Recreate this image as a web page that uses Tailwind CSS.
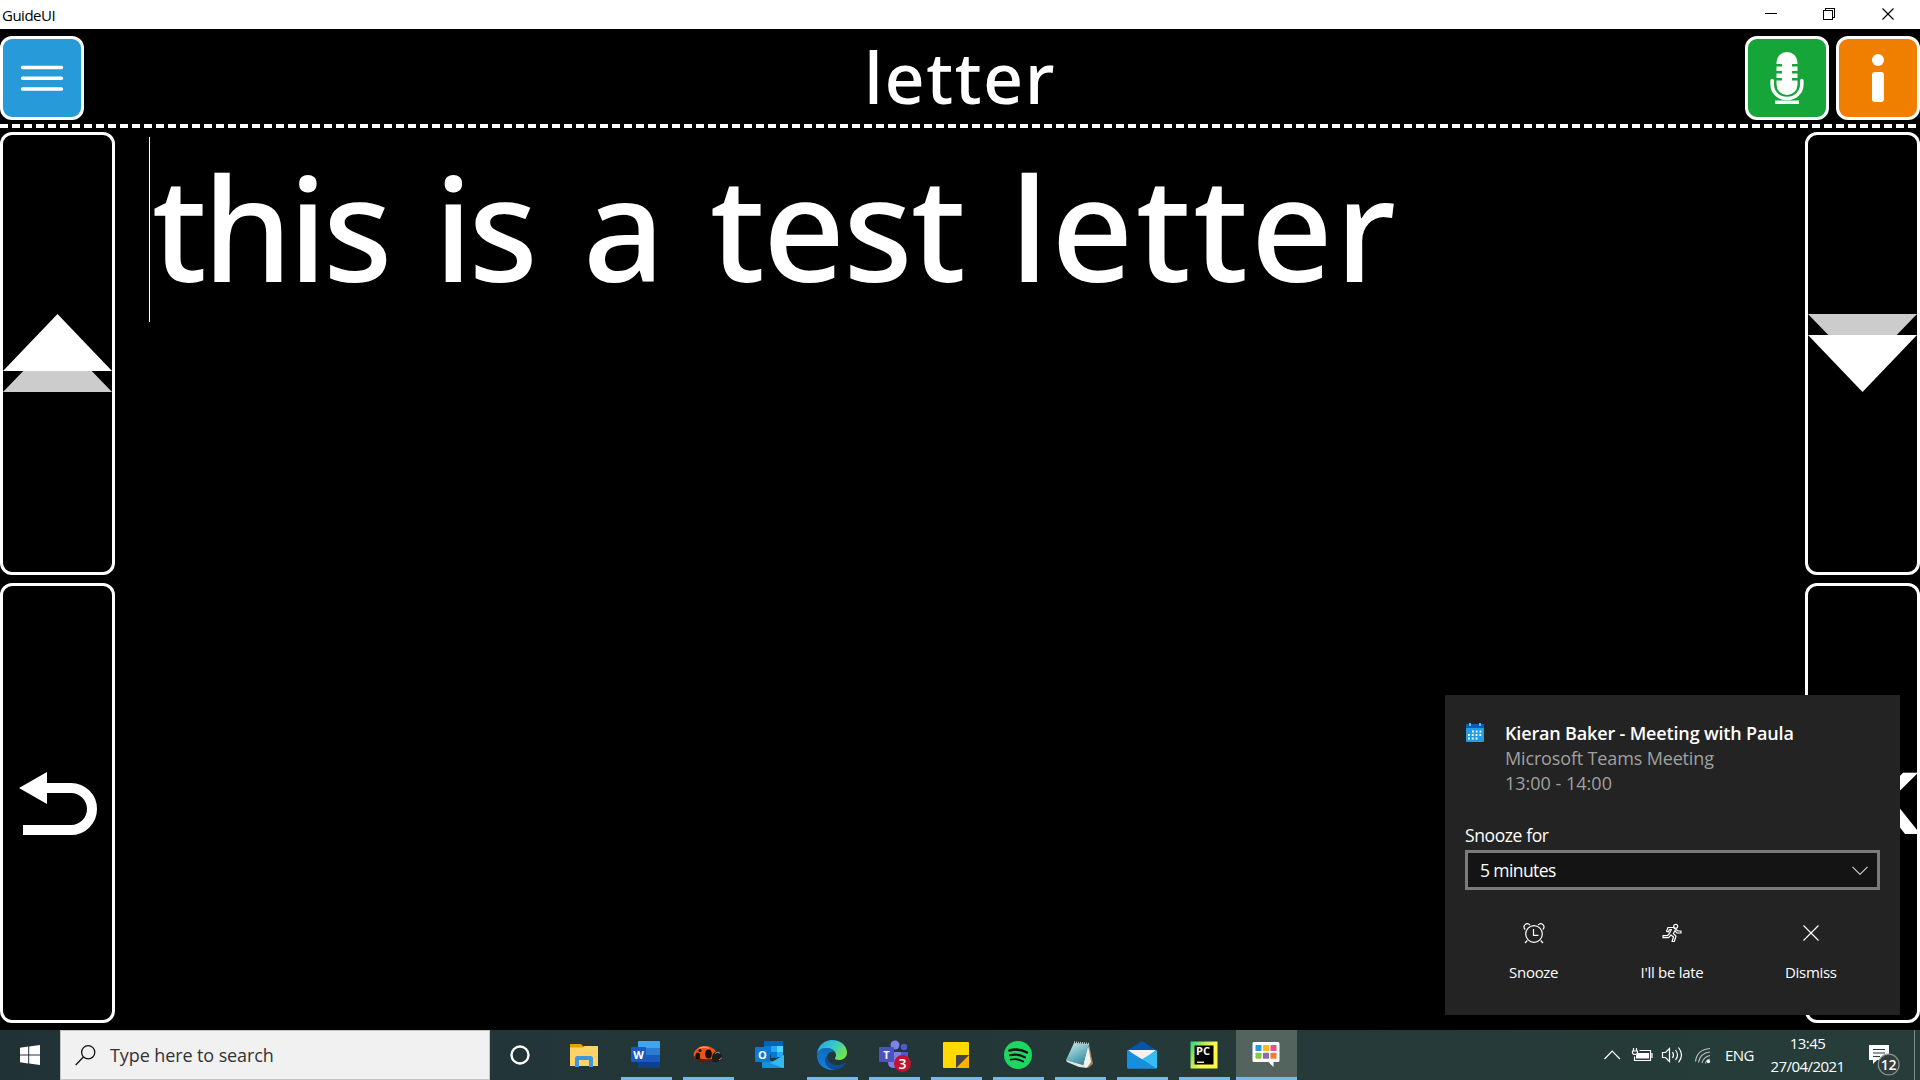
<!DOCTYPE html>
<html lang="en">
<head>
<meta charset="utf-8">
<title>GuideUI</title>
<script src="https://cdn.jsdelivr.net/npm/@tailwindcss/browser@4"></script>
</head>
<body class="relative flex h-[1080px] w-[1920px] flex-col overflow-hidden bg-black font-['Open_Sans',sans-serif] text-white">

<!-- Title bar -->
<header class="flex h-[29px] shrink-0 items-center justify-between bg-white text-black">
  <span class="pt-px pl-[2px] text-[15px] leading-none tracking-[-0.5px]">GuideUI</span>
  <svg class="h-[29px] w-[160px]" viewBox="1760 0 160 29" fill="none" stroke="#000" shape-rendering="crispEdges">
    <path d="M1765 13.500h12M1823.500 10.500h9v9h-9zM1825.500 10.500v-2h9v9h-2"/>
    <path d="M1882.500 8.500l11 11M1893.500 8.500l-11 11" shape-rendering="auto" stroke-width="1.200"/>
  </svg>
</header>

<!-- Heading row -->
<section class="flex h-[95px] shrink-0 items-start justify-between pt-[7px]">
  <div class="flex w-[175px]">
    <button class="flex h-[84px] w-[84px] items-center justify-center rounded-[12px] border-3 border-white bg-[#279bd9]">
      <svg class="h-[30px] w-[44px]" viewBox="0 0 44 30" stroke="#fff" stroke-width="3.400" stroke-linecap="round"><path d="M2.500 4.500h39M2.500 15.300h39M2.500 26h39"/></svg>
    </button>
  </div>
  <h1 class="text-[70px] leading-[82px] font-medium tracking-[1.6px] font-['Noto_Sans',sans-serif]">letter</h1>
  <div class="flex gap-[7px]">
    <button class="flex h-[84px] w-[84px] items-center justify-center rounded-[12px] border-3 border-white bg-[#16a538]">
      <svg class="h-[54px] w-[34px]" viewBox="0 0 34 54" fill="#fff">
        <rect x="6.500" y="1" width="21" height="43" rx="10.500"/>
        <path d="M6 13h6v2.400H6zM6 20h6v2.400H6zM6 27h6v2.400H6zM22 13h6v2.400h-6zM22 20h6v2.400h-6zM22 27h6v2.400h-6z" fill="#16a538"/>
        <path d="M2.200 29.500v4c0 8 6.500 14 14.800 14s14.800-6 14.800-14v-4" fill="none" stroke="#fff" stroke-width="3.600" stroke-linecap="round"/>
        <path d="M5 49.500h24v3.500H5z"/>
      </svg>
    </button>
    <button class="flex h-[84px] w-[84px] items-center justify-center rounded-[12px] border-3 border-white bg-[#f07f00]">
      <svg class="h-[48px] w-[12px]" viewBox="0 0 12 48" fill="#fff"><circle cx="6" cy="6" r="6"/><rect y="18" width="12" height="30" rx="3"/></svg>
    </button>
  </div>
</section>
<div class="h-1 shrink-0 bg-[repeating-linear-gradient(90deg,#fff_0_8px,#000_8px_12px)]"></div>

<!-- Editor area -->
<main class="flex h-[902px] shrink-0 justify-between pt-1">
  <nav class="flex w-[115px] flex-col gap-[8px]">
    <button class="flex h-[443px] justify-center rounded-[12px] border-3 border-white pt-[179px]">
      <svg class="h-[79px] w-[109px]" viewBox="0 0 109 79"><path d="M0 78L54.500 21.500 109 78z" fill="#ccc"/><path d="M0 57L54.500 0 109 57z" fill="#fff"/></svg>
    </button>
    <button class="flex h-[440px] justify-center rounded-[12px] border-3 border-white pt-[186px]">
      <svg class="h-[64px] w-[78px]" viewBox="0 0 78 64"><path d="M0 16L28 0v32z" fill="#fff"/><path d="M26 16h26a21 21 0 0 1 0 42H4" fill="none" stroke="#fff" stroke-width="10"/></svg>
    </button>
  </nav>

  <div class="flex grow pt-[5px] pl-[34px]">
    <div class="flex h-[185px] border-l border-white pl-[2px] font-['Noto_Sans',sans-serif] text-[143px] leading-[179px] font-medium">
      <span class="w-[282px] tracking-[-4px]">this</span>
      <span class="w-[149px] tracking-[-4px]">is</span>
      <span class="w-[127px] tracking-[-2px]">a</span>
      <span class="w-[300px] tracking-[-1.8px]">test</span>
      <span class="tracking-[2.6px]">letter</span>
    </div>
  </div>

  <nav class="flex w-[115px] flex-col gap-[8px]">
    <button class="flex h-[443px] justify-center rounded-[12px] border-3 border-white pt-[179px]">
      <svg class="h-[79px] w-[109px]" viewBox="0 0 109 79"><path d="M0 0L54.500 56.500 109 0z" fill="#ccc"/><path d="M0 21L54.500 78 109 21z" fill="#fff"/></svg>
    </button>
    <button class="flex h-[440px] items-center justify-end rounded-[12px] border-3 border-white font-['Liberation_Sans',sans-serif] text-[89px] leading-none font-bold tracking-[-4px]">OK</button>
  </nav>
</main>

<!-- Taskbar -->
<footer class="flex h-[50px] shrink-0 bg-linear-to-r from-[#213237] to-[#263d39]">
  <button class="flex w-[60px] items-center justify-center">
    <svg class="h-5 w-5" viewBox="0 0 20 20" fill="#fff"><path d="M0 2.800L8.200 1.600V9.500H0zM9.200 1.500L20 0v9.500H9.200zM0 10.500h8.200v7.900L0 17.200zM9.200 10.500H20V20L9.200 18.500z"/></svg>
  </button>
  <div class="flex w-[430px] items-center border border-[#c4c4c4] bg-[#f1f1f1] pl-[14px] text-[#333]">
    <svg class="h-[21px] w-[21px]" viewBox="0 0 21 21" fill="none" stroke="#111" stroke-width="1.300"><circle cx="13.200" cy="7.300" r="6.600"/><path d="M8.400 12L.7 20"/></svg>
    <span class="pl-[14px] text-[18px] tracking-[-0.1px]">Type here to search</span>
  </div>
  <div class="flex w-[63px] items-center pl-5">
    <svg class="h-5 w-5" viewBox="0 0 20 20"><circle cx="10" cy="10" r="8.500" fill="none" stroke="#fff" stroke-width="2.400"/></svg>
  </div>
  <div class="flex">
    <!-- File Explorer -->
    <div class="flex w-[62px] items-center justify-center">
      <svg class="h-[28px] w-[28px]" viewBox="0 0 28 28"><path d="M0 3h11l3 3v6H0z" fill="#e2a000"/><path d="M0 6.500h12.500l2-1.500H28v20H0z" fill="#fdd367"/><path d="M5 26V17.500A2.500 2.500 0 0 1 7.500 15h13a2.500 2.500 0 0 1 2.500 2.500V26h-4v-7H9v7z" fill="#3c97dc"/></svg>
    </div>
    <!-- Word -->
    <div class="flex w-[62px] flex-col items-center">
      <svg class="mt-[10px] h-[30px] w-[30px]" viewBox="0 0 30 30"><path d="M8 1h20a1 1 0 0 1 1 1v6H7V2a1 1 0 0 1 1-1z" fill="#41a5ee"/><path d="M7 8h22v7H7z" fill="#2b7cd3"/><path d="M7 15h22v7H7z" fill="#185abd"/><path d="M7 22h22v5a1 1 0 0 1-1 1H8a1 1 0 0 1-1-1z" fill="#103f91"/><rect y="7" width="15" height="15" rx="1" fill="#185abd"/><text x="7.500" y="18.500" text-anchor="middle" font-family="Open Sans" font-weight="700" font-size="11" fill="#fff">W</text></svg>
      <i class="mt-[7px] h-[3px] w-[51px] bg-[#76b9ed]"></i>
    </div>
    <!-- Ladybird -->
    <div class="flex w-[62px] flex-col items-center">
      <svg class="mt-[10px] h-[30px] w-[30px]" viewBox="0 0 30 30"><path d="M.5 14Q3 6.500 11 6t12 5.500l-1.500 7.500Q14 23 8 21.500 1 20 .5 14z" fill="#ea5416"/><path d="M1 16q2 6 9 6.500t12-3l.5-1.500q-11 3.500-21.500-2z" fill="#5e1d08"/><path d="M6 8.200q5-2.500 10 0" stroke="#ffb078" fill="none"/><ellipse cx="15.500" cy="14" rx="3.300" ry="4.500" fill="#111"/><ellipse cx="4.800" cy="16" rx="2.300" ry="3.500" fill="#111"/><circle cx="7" cy="10.500" r="1.500" fill="#111"/><path d="M19 18q0-6 5-6.500 5 1 5.500 6.500-4 5-8 4-3 0-2.500-4z" fill="#1b1b1b"/><path d="M22 13.500q2-2 5-.5M26 20l3-2.500" stroke="#999" fill="none"/></svg>
      <i class="mt-[7px] h-[3px] w-[51px] bg-[#76b9ed]"></i>
    </div>
    <!-- Outlook -->
    <div class="flex w-[62px] flex-col items-center">
      <svg class="mt-[10px] h-[30px] w-[30px]" viewBox="0 0 30 30"><path d="M9 1h19v14H9z" fill="#0364b8"/><path d="M9 6h7v8H9z" fill="#0078d4"/><path d="M16 6h6v8h-6z" fill="#28a8ea"/><path d="M22 6h6v8h-6z" fill="#50d9ff"/><path d="M16 12h6v6h-6z" fill="#0078d4"/><path d="M22 12h6v5h-6z" fill="#28a8ea"/><path d="M7 16l11 6 11-7v12a1 1 0 0 1-1 1H8a1 1 0 0 1-1-1z" fill="#1490df"/><path d="M29 15L15 23l13 5a1 1 0 0 0 1-1z" fill="#35b8f1"/><rect y="7" width="15" height="15" rx="1" fill="#0f78d4"/><text x="7.500" y="18.500" text-anchor="middle" font-family="Open Sans" font-weight="700" font-size="11" fill="#fff">O</text></svg>
    </div>
    <!-- Edge -->
    <div class="flex w-[62px] flex-col items-center">
      <svg class="mt-[10px] h-[30px] w-[30px]" viewBox="0 0 30 30">
        <defs><linearGradient id="edgeTop" x1="0" y1="0" x2="1" y2=".5"><stop offset="0" stop-color="#259fe0"/><stop offset=".55" stop-color="#35c7cf"/><stop offset="1" stop-color="#70e34f"/></linearGradient><linearGradient id="edgeSide" x1="0" y1="0" x2="0" y2="1"><stop offset="0" stop-color="#0c6cbd"/><stop offset="1" stop-color="#1580d8"/></linearGradient></defs>
        <path d="M0 14C1 5 8 0 15 0c9 0 15 6 15 12.500 0 5-4 7.500-8 7.500-3 0-4.500-1-4-2 1.500-1.500 1.500-5-1-7-4-4-13-4-17 3z" fill="url(#edgeTop)"/>
        <path d="M0 15C1 9 6 7.500 10 8c4 0 7 2 8 4-5-2-9 3-8 8 1 6 5 9 9 9.500C8 32-.5 24 0 15z" fill="url(#edgeSide)"/>
        <path d="M10.500 15c-1 7 5 10 10 10 3 0 5-1 7-2 1 0 1 .5.500 1-2 3-6 6-10 5.700-9-1-13-9-7.500-14.700z" fill="#0c4f98"/>
      </svg>
      <i class="mt-[7px] h-[3px] w-[51px] bg-[#76b9ed]"></i>
    </div>
    <!-- Teams -->
    <div class="relative flex w-[62px] flex-col items-center">
      <svg class="mt-[10px] h-[30px] w-[30px]" viewBox="0 0 30 30"><circle cx="16" cy="5" r="4.500" fill="#7b83eb"/><circle cx="25" cy="7" r="3.200" fill="#5059c9"/><path d="M20 12h9v8q-1 5-6 5-3 0-3-4z" fill="#5059c9"/><path d="M9 12h13v10q-1 6-7 6t-6-6z" fill="#7b83eb"/><rect y="7" width="15" height="15" rx="1" fill="#4b53bc"/><text x="7.500" y="18.500" text-anchor="middle" font-family="Open Sans" font-weight="700" font-size="11" fill="#fff">T</text></svg>
      <i class="mt-[7px] h-[3px] w-[51px] bg-[#76b9ed]"></i>
      <span class="absolute top-[25px] left-[31px] flex size-[17px] items-center justify-center rounded-full bg-[#c4122f] text-[14px] font-semibold">3</span>
    </div>
    <!-- Sticky Notes -->
    <div class="flex w-[62px] flex-col items-center">
      <svg class="mt-[10px] h-[30px] w-[30px]" viewBox="0 0 30 30"><path d="M3 2h24a1 1 0 0 1 1 1v12L15 28H3a1 1 0 0 1-1-1V3a1 1 0 0 1 1-1z" fill="#ffd900"/><path d="M28 15v13H15z" fill="#ffb000"/><path d="M15 28V16a1 1 0 0 1 1-1h12z" fill="#444"/></svg>
      <i class="mt-[7px] h-[3px] w-[51px] bg-[#76b9ed]"></i>
    </div>
    <!-- Spotify -->
    <div class="flex w-[62px] flex-col items-center">
      <svg class="mt-[10px] h-[30px] w-[30px]" viewBox="0 0 30 30" fill="none" stroke="#111" stroke-linecap="round"><circle cx="15" cy="15" r="14" fill="#1ed760" stroke="none"/><path d="M6.500 10.500c6-1.700 12-1 17.500 2" stroke-width="2.500"/><path d="M7 15.300c5-1.400 10-.8 15 2" stroke-width="2.100"/><path d="M7.700 19.700c4.500-1 8.500-.6 12.500 1.800" stroke-width="1.800"/></svg>
      <i class="mt-[7px] h-[3px] w-[51px] bg-[#76b9ed]"></i>
    </div>
    <!-- Notepad -->
    <div class="flex w-[62px] flex-col items-center">
      <svg class="mt-[10px] h-[30px] w-[30px]" viewBox="0 0 30 30"><defs><linearGradient id="pad" x1="0" y1="0" x2=".6" y2="1"><stop stop-color="#d5eef0"/><stop offset=".6" stop-color="#6fb5c1"/><stop offset="1" stop-color="#3d8a9f"/></linearGradient></defs><path d="M24 4l4 20-5 4z" fill="#a7824c"/><path d="M23 4l3 18-4 6-4-2z" fill="#eef2f2"/><path d="M9 3l15 1-6 21L1 20z" fill="url(#pad)"/><path d="M1 20l17 5 4 3-8-1L2 22z" fill="#dbe7e8"/><path d="M9 2.500l15 1.500" stroke="#bfc5c5" stroke-width="2.500" stroke-dasharray="1 1"/></svg>
      <i class="mt-[7px] h-[3px] w-[51px] bg-[#76b9ed]"></i>
    </div>
    <!-- Mail -->
    <div class="flex w-[62px] flex-col items-center">
      <svg class="mt-[10px] h-[30px] w-[30px]" viewBox="0 0 30 30"><path d="M0 10.500L15 1l15 9.500L15 20z" fill="#0554a8"/><path d="M1 10h28L15 22z" fill="#f4f2f2"/><path d="M0 10l30 18.500H1a1 1 0 0 1-1-1z" fill="#1490df"/><path d="M30 10v17.500a1 1 0 0 1-1 1L15 19.200z" fill="#35bef3"/><path d="M15 19.200l14 9.300H1z" fill="#168fe0"/></svg>
      <i class="mt-[7px] h-[3px] w-[51px] bg-[#76b9ed]"></i>
    </div>
    <!-- PyCharm -->
    <div class="flex w-[62px] flex-col items-center">
      <svg class="mt-[10px] h-[30px] w-[30px]" viewBox="0 0 30 30"><defs><linearGradient id="pc" x1="0" y1="0" x2="1" y2=".6"><stop stop-color="#21d789"/><stop offset=".45" stop-color="#c8ea4a"/><stop offset=".7" stop-color="#fcf84a"/></linearGradient></defs><path d="M1.500 1.500h27v27h-27z" fill="url(#pc)"/><path d="M5.500 5.500h19v19h-19z" fill="#000"/><text x="7" y="15" font-family="Open Sans" font-weight="700" font-size="10.500" fill="#fff" textLength="14" lengthAdjust="spacingAndGlyphs">PC</text><path d="M8 21.500h7v1.500H8z" fill="#ddd"/></svg>
      <i class="mt-[7px] h-[3px] w-[51px] bg-[#76b9ed]"></i>
    </div>
    <!-- Guide -->
    <div class="ml-px flex w-[61px] flex-col items-center bg-[#53645f]">
      <svg class="mt-[10px] mr-[2px] h-[30px] w-[30px]" viewBox="0 0 30 30"><path d="M3 2h24a1.500 1.500 0 0 1 1.500 1.500v17A1.500 1.500 0 0 1 27 22h-4.500v5l-5-5H3a1.500 1.500 0 0 1-1.500-1.500v-17A1.500 1.500 0 0 1 3 2z" fill="#fff"/><rect x="4.500" y="5" width="6" height="6" rx=".6" fill="#279bd9"/><rect x="12" y="5" width="6" height="6" rx=".6" fill="#fdb813"/><rect x="19.500" y="5" width="6" height="6" rx=".6" fill="#ec4b93"/><rect x="4.500" y="12.700" width="6" height="6" rx=".6" fill="#8cc63f"/><rect x="12" y="12.700" width="6" height="6" rx=".6" fill="#8f6bb0"/><rect x="19.500" y="12.700" width="6" height="6" rx=".6" fill="#f08020"/></svg>
      <i class="mt-[7px] h-[3px] w-full bg-[#76b9ed]"></i>
    </div>
  </div>

  <!-- System tray -->
  <div class="ml-auto flex items-center">
    <svg class="h-[50px] w-[120px]" viewBox="1600 1030 120 50" fill="none" stroke="#fff" stroke-width="1.200">
      <path d="M1604.500 1059l7.700-8 7.700 8"/>
      <path d="M1639.500 1050.500h11v10h-16v-4M1652 1053v5"/><path d="M1637 1053h12v5.500h-13v-3z" fill="#fff" stroke="none"/><path d="M1633.500 1048v3M1636.500 1048v3"/><path d="M1632.500 1051h5v2q-.5 1.500-2.500 1.500t-2.500-1.500z" fill="#263d39"/>
      <path d="M1662.500 1052.500h3l4-4v13l-4-4h-3zM1672.500 1052q2 3 0 6M1675.500 1050q4 5 0 10M1678.500 1047.500q6 7.500 0 15"/>
      <path d="M1695.500 1061.500Q1697 1049.500 1710 1048.500M1698.500 1062.500Q1700 1053 1710 1052M1702 1063Q1703.500 1057 1710 1055.500M1705.500 1063.500Q1706 1060 1710 1059" stroke="#b6c0be"/><circle cx="1708.500" cy="1061.500" r="1.700" fill="#fff" stroke="none"/>
    </svg>
    <span class="w-[40px] pl-[5px] text-[15px] tracking-[-0.6px]">ENG</span>
    <div class="flex w-[96px] flex-col items-center pr-px text-[15px] leading-[23px] tracking-[-0.55px]"><span>13:45</span><span>27/04/2021</span></div>
    <svg class="h-[50px] w-[58px]" viewBox="1856 1030 58 50">
      <path d="M1869 1045h20v15h-12l-4 4v-4h-4z" fill="#fff"/><path d="M1873 1049.500h12M1873 1053h12M1873 1056.500h7" stroke="#263d39" stroke-width="1.200"/>
      <circle cx="1888.700" cy="1064.500" r="10.400" fill="#333d3c" stroke="#899391" stroke-width="1.200"/>
      <text x="1888.500" y="1069.500" text-anchor="middle" font-family="Open Sans" font-weight="600" font-size="14" letter-spacing="-.3" fill="#fff">12</text>
    </svg>
    <div class="h-full w-[6px] border-l border-[#7d8b88]"></div>
  </div>
</footer>

<!-- Reminder toast -->
<aside class="absolute top-[695px] left-[1445px] flex h-[320px] w-[455px] flex-col bg-[#232323] px-5 pt-[26px]">
  <div class="flex gap-[20px]">
    <svg class="mt-[2px] h-[19px] w-5" viewBox="0 0 20 19"><path d="M1 1h18v6H1z" fill="#0a5fb4"/><path d="M1 5h18v13a1 1 0 0 1-1 1H2a1 1 0 0 1-1-1z" fill="#239ee6"/><path d="M5 0v3M15 0v3" stroke="#62d7fb" stroke-width="1.600"/><path d="M7 8.500h10M3 12h14M3 15.500h10" stroke="#fff" stroke-width="1.800" stroke-dasharray="1.800 2"/></svg>
    <div class="text-[18px] leading-[25px] whitespace-nowrap">
      <h2 class="font-semibold tracking-[-0.16px]">Kieran Baker - Meeting with Paula</h2>
      <p class="tracking-[-0.15px] text-[#a0a0a0]">Microsoft Teams Meeting</p>
      <p class="tracking-[0px] text-[#a0a0a0]">13:00 - 14:00</p>
    </div>
  </div>
  <p class="mt-[27px] text-[17.5px] leading-[25px] tracking-[-0.4px]">Snooze for</p>
  <div class="mt-[2px] flex h-10 shrink-0 items-center justify-between border-3 border-[#7b7b7b] bg-[#141414] pr-[9px] pl-3">
    <span class="text-[17.5px] tracking-[-0.6px]">5 minutes</span>
    <svg class="h-[9px] w-4" viewBox="0 0 16 9" fill="none" stroke="#ccc" stroke-width="1.200"><path d="M.5.8L8 8.300 15.500.8"/></svg>
  </div>
  <div class="mt-[32px] grid grid-cols-3 text-center text-[15px] leading-5 tracking-[-0.3px]">
    <button class="flex flex-col items-center gap-[18px] pr-px">
      <svg class="h-[22px] w-[22px]" viewBox="0 0 22 22" fill="none" stroke="#fff" stroke-width="1.200"><circle cx="11" cy="12" r="8.300"/><path d="M10.500 7v6.300h5M4.300 18.500L2 21M17.700 18.500l2.300 2.500M2.200 7.500C-1 4 3.500-.5 7 3M19.800 7.500C23 4 18.500-.5 15 3"/></svg>
      <span>Snooze</span>
    </button>
    <button class="flex flex-col items-center gap-[18px] pr-px">
      <svg class="h-[22px] w-[22px]" viewBox="0 0 22 22" fill="none" stroke="#fff" stroke-width="1.200" stroke-linejoin="round"><circle cx="14.700" cy="4.300" r="2"/><path d="M12.500 5.500H7L5.500 9.300l1.800.7L8.500 7.500h2L8 12l-1.500 1.700H2v2h5.500L10 13l2.500 2-1.500 4.500h2.200L15 14.200l-2.700-2.700L14 8.500l1.700 2.500H20V9h-3z"/></svg>
      <span>I'll be late</span>
    </button>
    <button class="flex flex-col items-center gap-[18px]">
      <svg class="h-[22px] w-[22px]" viewBox="0 0 22 22" fill="none" stroke="#fff" stroke-width="1.200"><path d="M3.500 3.500l15 15M18.500 3.500l-15 15"/></svg>
      <span>Dismiss</span>
    </button>
  </div>
</aside>
</body>
</html>
